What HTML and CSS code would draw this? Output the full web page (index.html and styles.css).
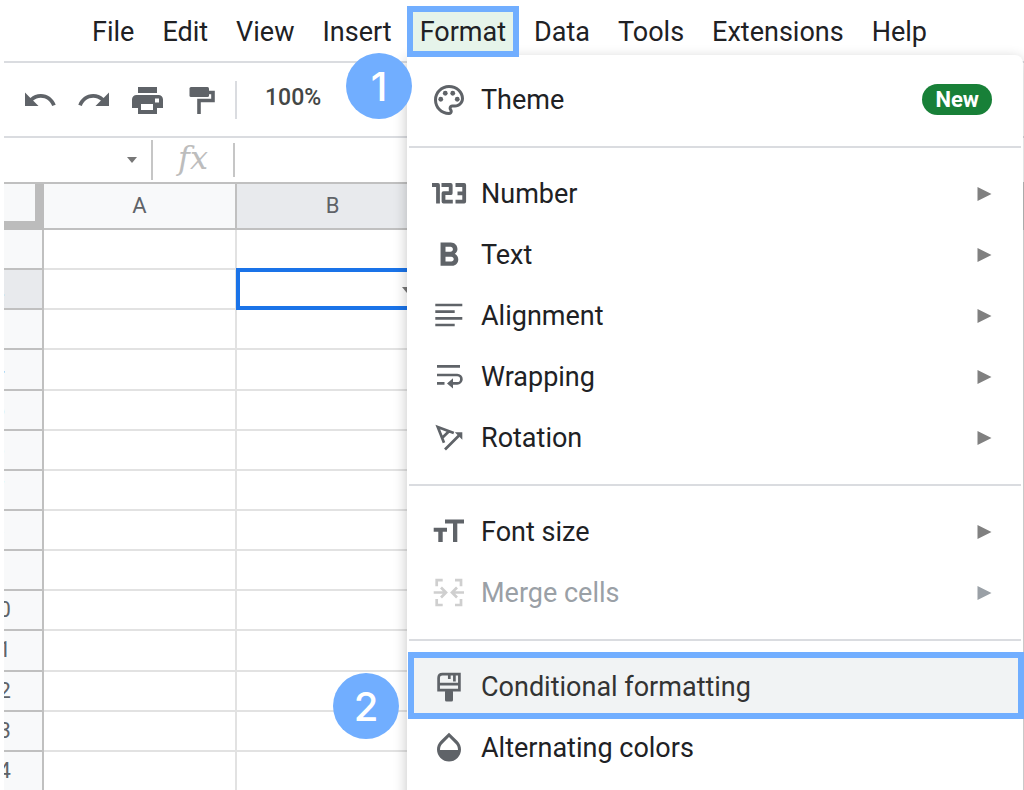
FILE: index.html
```html
<!DOCTYPE html>
<html lang="en">
<head>
<meta charset="utf-8">
<meta name="viewport" content="width=device-width, initial-scale=1">
<title>Spreadsheet – Format menu</title>
<link rel="stylesheet" href="styles.css">
</head>
<body>
<div class="app">
  <nav class="menubar" aria-label="Main menu">
    <button class="menu-btn" type="button">File</button>
    <button class="menu-btn" type="button">Edit</button>
    <button class="menu-btn" type="button">View</button>
    <button class="menu-btn" type="button">Insert</button>
    <button class="menu-btn is-open" type="button" aria-expanded="true">Format</button>
    <button class="menu-btn" type="button">Data</button>
    <button class="menu-btn" type="button">Tools</button>
    <button class="menu-btn" type="button">Extensions</button>
    <button class="menu-btn" type="button">Help</button>
  </nav>

  <div class="toolbar">
    <button class="tool" type="button" aria-label="Undo"><svg class="icon" viewBox="0 0 24 24"><path d="M12.5 8c-2.65 0-5.05.99-6.9 2.6L2 7v9h9l-3.62-3.62c1.39-1.16 3.16-1.88 5.12-1.88 3.54 0 6.55 2.31 7.6 5.5l2.37-.78C21.08 11.03 17.15 8 12.5 8z"/></svg></button>
    <button class="tool" type="button" aria-label="Redo"><svg class="icon" viewBox="0 0 24 24"><path d="M18.4 10.6C16.55 8.99 14.15 8 11.5 8c-4.65 0-8.58 3.03-9.96 7.22L3.9 16c1.05-3.19 4.05-5.5 7.6-5.5 1.95 0 3.73.72 5.12 1.88L13 16h9V7l-3.6 3.6z"/></svg></button>
    <button class="tool" type="button" aria-label="Print"><svg class="icon" viewBox="0 0 36 36"><path fill-rule="evenodd" d="M8 5h19v6H8zM6.5 13h22a4.500 4.500 0 0 1 4.500 4.500V26h-6v6H8v-6H2v-8.500A4.500 4.500 0 0 1 6.500 13zM11 22v6h12v-6zM25 16.500v4h4v-4z"/></svg></button>
    <button class="tool" type="button" aria-label="Paint format"><svg class="icon" viewBox="0 0 36 36"><rect x="5.500" y="5" width="19.500" height="10" rx="1.500"/><path class="line" stroke-width="3.600" d="M25 10.500h4v8H15V32"/></svg></button>
    <span class="tool-sep"></span>
    <button class="zoom" type="button">100%</button>
  </div>

  <div class="formula">
    <button class="name-box" type="button" aria-label="Name box"><svg class="caret" viewBox="0 0 10 6"><path d="M0 0h10L5 6z"/></svg></button>
    <span class="fx">fx</span>
    <input class="formula-input" type="text" aria-label="Formula">
  </div>

  <div class="sheet">
    <table class="grid">
      <thead><tr><th class="gutter corner"></th><th class="col">A</th><th class="col is-active">B</th><th></th></tr></thead>
      <tbody>
        <tr><th class="gutter">1</th><td></td><td></td><td></td></tr>
        <tr><th class="gutter is-active">2</th><td></td><td class="selected"><svg class="caret cell-caret" viewBox="0 0 10 6"><path d="M0 0h10L5 6z"/></svg></td><td></td></tr>
        <tr><th class="gutter">3</th><td></td><td></td><td></td></tr>
        <tr><th class="gutter">4</th><td></td><td></td><td></td></tr>
        <tr><th class="gutter">5</th><td></td><td></td><td></td></tr>
        <tr><th class="gutter">6</th><td></td><td></td><td></td></tr>
        <tr><th class="gutter">7</th><td></td><td></td><td></td></tr>
        <tr><th class="gutter">8</th><td></td><td></td><td></td></tr>
        <tr><th class="gutter">9</th><td></td><td></td><td></td></tr>
        <tr><th class="gutter">10</th><td></td><td></td><td></td></tr>
        <tr><th class="gutter">11</th><td></td><td></td><td></td></tr>
        <tr><th class="gutter">12</th><td></td><td></td><td></td></tr>
        <tr><th class="gutter">13</th><td></td><td></td><td></td></tr>
        <tr><th class="gutter">14</th><td></td><td></td><td></td></tr>
      </tbody>
    </table>
  </div>

  <div class="panel" role="menu" aria-label="Format">
    <button class="item" type="button" role="menuitem">
      <svg class="icon" viewBox="0 0 24 24"><path d="M12 22C6.490 22 2 17.510 2 12S6.490 2 12 2s10 4.040 10 9c0 3.310-2.690 6-6 6h-1.770c-.28 0-.5.22-.5.5 0 .12.05.23.13.33.41.47.64 1.060.64 1.670 0 1.380-1.120 2.500-2.500 2.500zm0-18c-4.410 0-8 3.590-8 8s3.590 8 8 8c.28 0 .5-.22.5-.5 0-.16-.08-.28-.14-.35-.41-.46-.63-1.050-.63-1.650 0-1.380 1.120-2.500 2.500-2.500H16c2.210 0 4-1.790 4-4 0-3.860-3.590-7-8-7z"/><circle cx="6.500" cy="11.500" r="1.600"/><circle cx="9.500" cy="7.500" r="1.600"/><circle cx="14.500" cy="7.500" r="1.600"/><circle cx="17.500" cy="11.500" r="1.600"/></svg>
      <span class="label">Theme</span><span class="new">New</span>
    </button>
    <hr class="rule">
    <button class="item" type="button" role="menuitem">
      <svg class="icon" viewBox="0 0 36 36"><path class="line" stroke-width="3.800" stroke-linejoin="round" d="M1 9h6v18.500M10.500 9h9.200v8.200h-7.200v8.400h9.300M24.500 9h8.700v16.600h-8.700M26.500 17.300h6"/></svg>
      <span class="label">Number</span><svg class="arrow" viewBox="0 0 14 14"><path d="M0 0l14 7-14 7z"/></svg>
    </button>
    <button class="item" type="button" role="menuitem">
      <svg class="icon" viewBox="0 0 36 36"><path transform="translate(-2 -1) scale(1.650)" d="M15.600 10.790c.97-.67 1.650-1.770 1.650-2.790 0-2.260-1.750-4-4-4H7v14h7.040c2.090 0 3.710-1.700 3.710-3.790 0-1.520-.86-2.820-2.150-3.420zM10 6.500h3c.83 0 1.500.67 1.500 1.500s-.67 1.500-1.500 1.500h-3v-3zm3.500 9H10v-3h3.500c.83 0 1.500.67 1.500 1.500s-.67 1.500-1.500 1.500z"/></svg>
      <span class="label">Text</span><svg class="arrow" viewBox="0 0 14 14"><path d="M0 0l14 7-14 7z"/></svg>
    </button>
    <button class="item" type="button" role="menuitem">
      <svg class="icon" viewBox="0 0 36 36"><path class="line" stroke-width="2.700" d="M4.300 7h27M4.300 13.700h19.400M4.300 20.300h27M4.300 27h19.400"/></svg>
      <span class="label">Alignment</span><svg class="arrow" viewBox="0 0 14 14"><path d="M0 0l14 7-14 7z"/></svg>
    </button>
    <button class="item" type="button" role="menuitem">
      <svg class="icon" viewBox="0 0 36 36"><path class="line" stroke-width="2.700" d="M6 7.300h23M6 16h20.200a4.200 4.200 0 0 1 0 8.400H20M6 24.400h7.500"/><path d="M16 24.400l6-5.200v10.400z"/></svg>
      <span class="label">Wrapping</span><svg class="arrow" viewBox="0 0 14 14"><path d="M0 0l14 7-14 7z"/></svg>
    </button>
    <button class="item" type="button" role="menuitem">
      <svg class="icon" viewBox="0 0 36 36"><path class="line" stroke-width="2.700" d="M13 22.800L6.800 7l16 6M10.800 18.200l7.200-7M14 29.500l14-14"/><path d="M31.300 12.300v7.500l-7.500-7.500z"/></svg>
      <span class="label">Rotation</span><svg class="arrow" viewBox="0 0 14 14"><path d="M0 0l14 7-14 7z"/></svg>
    </button>
    <hr class="rule">
    <button class="item" type="button" role="menuitem">
      <svg class="icon" viewBox="0 0 36 36"><path d="M14 5.500h19v4h-6.700V28H22V9.500h-8zM2.700 13.700H16v4h-4.300V28H7.300V17.700H2.700z"/></svg>
      <span class="label">Font size</span><svg class="arrow" viewBox="0 0 14 14"><path d="M0 0l14 7-14 7z"/></svg>
    </button>
    <button class="item is-disabled" type="button" role="menuitem" disabled>
      <svg class="icon" viewBox="0 0 36 36"><path class="line" stroke-width="2.700" d="M11.700 5.200h-6v6M24 5.200h6v6M5.700 24v6h6M30 24v6h-6M2.700 17.500h12M10 12.500l5 5-5 5M33 17.500H21M26 12.500l-5 5 5 5"/></svg>
      <span class="label">Merge cells</span><svg class="arrow" viewBox="0 0 14 14"><path d="M0 0l14 7-14 7z"/></svg>
    </button>
    <hr class="rule">
    <button class="item is-marked" type="button" role="menuitem">
      <svg class="icon" viewBox="0 0 36 36"><path class="line" stroke-width="2.700" d="M11.500 5.200h16.900v16H7.600V9q0-3.800 3.900-3.800zM7.600 15.200h20.800M18.300 5v5M23.400 5v7.500"/><rect x="14" y="21" width="8" height="11.500" rx="1.500"/></svg>
      <span class="label">Conditional formatting</span>
    </button>
    <button class="item" type="button" role="menuitem">
      <svg class="icon" viewBox="0 0 24 24"><path transform="translate(0 -.6)" d="M17.660 8L12 2.350 6.340 8C4.780 9.560 4 11.640 4 13.640s.78 4.110 2.340 5.670 3.610 2.350 5.660 2.350 4.100-.79 5.660-2.350S20 15.640 20 13.640 19.220 9.560 17.660 8zM6 14c.01-2 .62-3.270 1.760-4.400L12 5.270l4.240 4.380C17.380 10.770 17.990 12 18 14H6z"/></svg>
      <span class="label">Alternating colors</span>
    </button>
  </div>

  <span class="step step-one">1</span>
  <span class="step step-two">2</span>
</div>
</body>
</html>
```
FILE: styles.css
```css
* {
  box-sizing: border-box;
}

body {
  margin: 0;
  background: #fff;
  color: #202124;
  font-family: Roboto, "Liberation Sans", sans-serif;
}

button {
  margin: 0;
  padding: 0;
  border: 0;
  background: none;
  color: inherit;
  font: inherit;
}

.app {
  position: relative;
  display: flex;
  flex-direction: column;
  height: 100vh;
  min-height: 600px;
  padding-left: 4px;
  overflow: hidden;
}

.icon {
  flex: none;
  display: block;
  width: 36px;
  height: 36px;
  fill: #5f6368;
}

.line {
  fill: none;
  stroke: #5f6368;
}

/* Menu bar */
.menubar {
  flex: none;
  display: flex;
  align-items: flex-start;
  gap: 4px;
  height: 63px;
  padding: 6px 0 0 76px;
  border-bottom: 2px solid #dadce0;
}

.menu-btn {
  height: 51px;
  padding: 0 12px;
  font-size: 27px;
  line-height: 48px;
}

.menu-btn.is-open {
  position: relative;
  z-index: 3;
  margin: 0 -1px;
  padding: 0 7px;
  border: 6px solid #71aeff;
  background: #e6f4ea;
  line-height: 36px;
}

/* Toolbar */
.toolbar {
  flex: none;
  display: flex;
  align-items: center;
  gap: 18px;
  height: 75px;
  padding-left: 18px;
  border-bottom: 2px solid #dadce0;
}

.tool-sep {
  width: 2px;
  height: 38px;
  margin-right: 10px;
  margin-left: -3px;
  background: #dadce0;
}

.zoom {
  padding-bottom: 4px;
  color: #444746;
  font-size: 23px;
  font-weight: 500;
}

/* Formula bar */
.formula {
  flex: none;
  display: flex;
  align-items: center;
  height: 44px;
}

.name-box {
  display: flex;
  align-items: center;
  justify-content: flex-end;
  width: 149px;
  height: 40px;
  padding-right: 14px;
  border-right: 2px solid #c6c6c6;
}

.caret {
  width: 10px;
  height: 6px;
  fill: #777;
}

.fx {
  width: 80px;
  padding-bottom: 4px;
  color: #bdbdbd;
  font: italic 32px/36px "DejaVu Serif", serif;
  text-align: center;
}

.formula-input {
  flex: 1;
  min-width: 0;
  height: 34px;
  border: 0;
  border-left: 2px solid #c6c6c6;
  background: none;
  font: inherit;
  outline: 0;
}

/* Sheet */
.sheet {
  flex: 1;
  min-height: 0;
  margin-bottom: -2px;
  overflow: hidden;
  border-top: 2px solid #c0c0c0;
}

.grid {
  width: calc(100% + 49px);
  height: 100%;
  margin-left: -49px;
  border-spacing: 0;
  table-layout: fixed;
}

.grid th,
.grid td {
  padding: 0;
  border-right: 2px solid #e2e2e2;
  border-bottom: 2px solid #e2e2e2;
}

.grid th {
  border-color: #c0c0c0;
  background: #f8f9fa;
  color: #5f6368;
  font-size: 22px;
  font-weight: 400;
  line-height: 26px;
}

.grid thead th {
  height: 46px;
}

.grid .gutter {
  width: 89px;
}

.grid .corner {
  border-right: 9px solid #bcbcbc;
  border-bottom: 9px solid #bcbcbc;
}

.grid .col {
  width: 193px;
}

.grid th.is-active {
  background: #e8eaed;
}

.grid .selected {
  position: relative;
  text-align: right;
}

.selected::before {
  content: "";
  position: absolute;
  inset: -2px -2px -2px -1px;
  border: 4px solid #1a73e8;
}

.cell-caret {
  margin-right: 16px;
  vertical-align: middle;
}

/* Format menu */
.panel {
  position: absolute;
  z-index: 1;
  top: 55px;
  right: 1px;
  bottom: -20px;
  left: 407px;
  padding-top: 14px;
  border-radius: 0 8px 0 0;
  background: #fff;
  box-shadow: 0 4px 14px rgba(0, 0, 0, 0.24);
}

.item {
  display: flex;
  align-items: center;
  gap: 14px;
  width: 100%;
  height: 61px;
  padding: 0 31px 0 24px;
  font-size: 27px;
  line-height: 36px;
  text-align: left;
}

.label {
  flex: 1;
}

.arrow {
  width: 15px;
  height: 14px;
  fill: #808080;
}

.rule {
  height: 2px;
  margin: 16px 2px 15px;
  border: 0;
  background: #dadce0;
}

.new {
  padding: 0 13px;
  border-radius: 16px;
  background: #188038;
  color: #fff;
  font-size: 22px;
  font-weight: 700;
  line-height: 31px;
}

.is-disabled {
  color: #9aa0a6;
}

.is-disabled .line {
  stroke: #cfcfcf;
}

.is-disabled .arrow {
  fill: #9aa0a6;
}

.is-marked {
  position: relative;
  color: #333;
}

.is-marked::before {
  content: "";
  position: absolute;
  z-index: -1;
  inset: -4px -1px -2px 1px;
  border: 6px solid #71aeff;
  background: #f1f3f4;
}

/* Numbered callouts */
.step {
  position: absolute;
  z-index: 4;
  width: 66px;
  height: 66px;
  border-radius: 50%;
  background: #71aeff;
  color: #fff;
  font: 500 40px/68px Inter, "Liberation Sans", sans-serif;
  text-align: center;
}

.step-one {
  top: 53px;
  left: 346px;
}

.step-two {
  top: 673px;
  left: 333px;
}
```
